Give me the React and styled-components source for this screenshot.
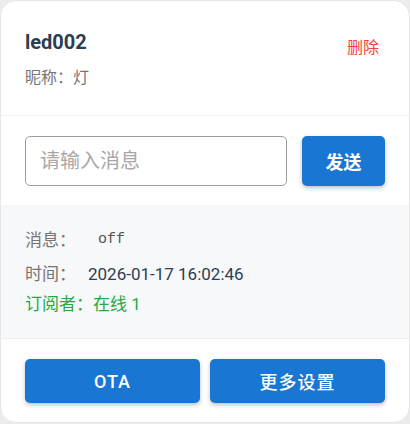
import React from "react";
import styled, { createGlobalStyle } from "styled-components";

const GlobalStyle = createGlobalStyle`
  body {
    margin: 0;
    background: #ececec;
    font-family: Roboto, "Noto Sans CJK SC", sans-serif;
  }
`;

const Card = styled.div`
  width: 410px;
  height: 423px;
  box-sizing: border-box;
  background: #fff;
  border: 1px solid #e6e6e6;
  border-radius: 16px;
  overflow: hidden;
  display: flex;
  flex-direction: column;
`;

const Header = styled.div`
  display: flex;
  justify-content: space-between;
  align-items: flex-start;
  padding: 28px 24px 26px;
  border-bottom: 1px solid #eeeeee;
`;

const Titles = styled.div`
  display: flex;
  flex-direction: column;
  gap: 12px;
`;

const Name = styled.div`
  font-size: 20px;
  font-weight: 700;
  line-height: 26px;
  color: #2c3e50;
`;

const Nick = styled.div`
  font-size: 16px;
  line-height: 22px;
  color: #757575;
`;

const DeleteButton = styled.button`
  border: none;
  background: none;
  font-family: inherit;
  font-size: 16px;
  line-height: 20px;
  color: #f44336;
  padding: 6px 6px;
  margin-top: 3px;
  cursor: pointer;
`;

const SendRow = styled.div`
  display: flex;
  gap: 15px;
  padding: 20px 24px 19px;
`;

const Input = styled.input`
  flex: 1;
  min-width: 0;
  width: 0;
  height: 50px;
  box-sizing: border-box;
  border: 1px solid #9e9e9e;
  border-radius: 5px;
  padding: 0 14px;
  font-family: inherit;
  font-size: 20px;
  color: #333;
  outline: none;
  &::placeholder {
    color: #a8a8a8;
  }
`;

const PrimaryButton = styled.button`
  width: ${({ $width }) => $width || "auto"};
  flex: ${({ $grow }) => ($grow ? 1 : "none")};
  height: ${({ $height }) => $height || "44px"};
  border: none;
  border-radius: 5px;
  background: #1976d2;
  color: #fff;
  font-family: inherit;
  font-size: 18px;
  font-weight: ${({ $weight }) => $weight || 700};
  letter-spacing: ${({ $spacing }) => $spacing || "0"};
  box-shadow: 0 2px 4px rgba(0, 0, 0, 0.25);
  cursor: pointer;
`;

const Info = styled.div`
  background: #f7f8fa;
  padding: 19px 24px 22px;
  display: flex;
  flex-direction: column;
  gap: 6px;
  border-bottom: 1px solid #eeeeee;
`;

const Row = styled.div`
  display: flex;
  align-items: center;
  font-size: 17px;
  line-height: 24px;
  min-height: ${({ $tall }) => ($tall ? "32px" : "24px")};
  color: ${({ $color }) => $color || "#2c3e50"};
`;

const Label = styled.span`
  color: #757575;
  width: 63px;
`;

const Code = styled.code`
  font-family: "Liberation Mono", monospace;
  font-size: 15px;
  color: #555;
  padding: 4px 10px;
`;

const Footer = styled.div`
  display: flex;
  gap: 10px;
  padding: 20px 24px;
`;

export default function App() {
  return (
    <>
      <GlobalStyle />
      <Card>
        <Header>
          <Titles>
            <Name>led002</Name>
            <Nick>昵称：灯</Nick>
          </Titles>
          <DeleteButton>删除</DeleteButton>
        </Header>
        <SendRow>
          <Input placeholder="请输入消息" />
          <PrimaryButton $width="83px" $height="50px">
            发送
          </PrimaryButton>
        </SendRow>
        <Info>
          <Row $tall>
            <Label>消息：</Label>
            <Code>off</Code>
          </Row>
          <Row>
            <Label>时间：</Label>
            2026-01-17 16:02:46
          </Row>
          <Row $color="#28a745">订阅者：在线 1</Row>
        </Info>
        <Footer>
          <PrimaryButton $grow $weight={500} $spacing="1px">
            OTA
          </PrimaryButton>
          <PrimaryButton $grow $weight={500} $spacing="1px">
            更多设置
          </PrimaryButton>
        </Footer>
      </Card>
    </>
  );
}
